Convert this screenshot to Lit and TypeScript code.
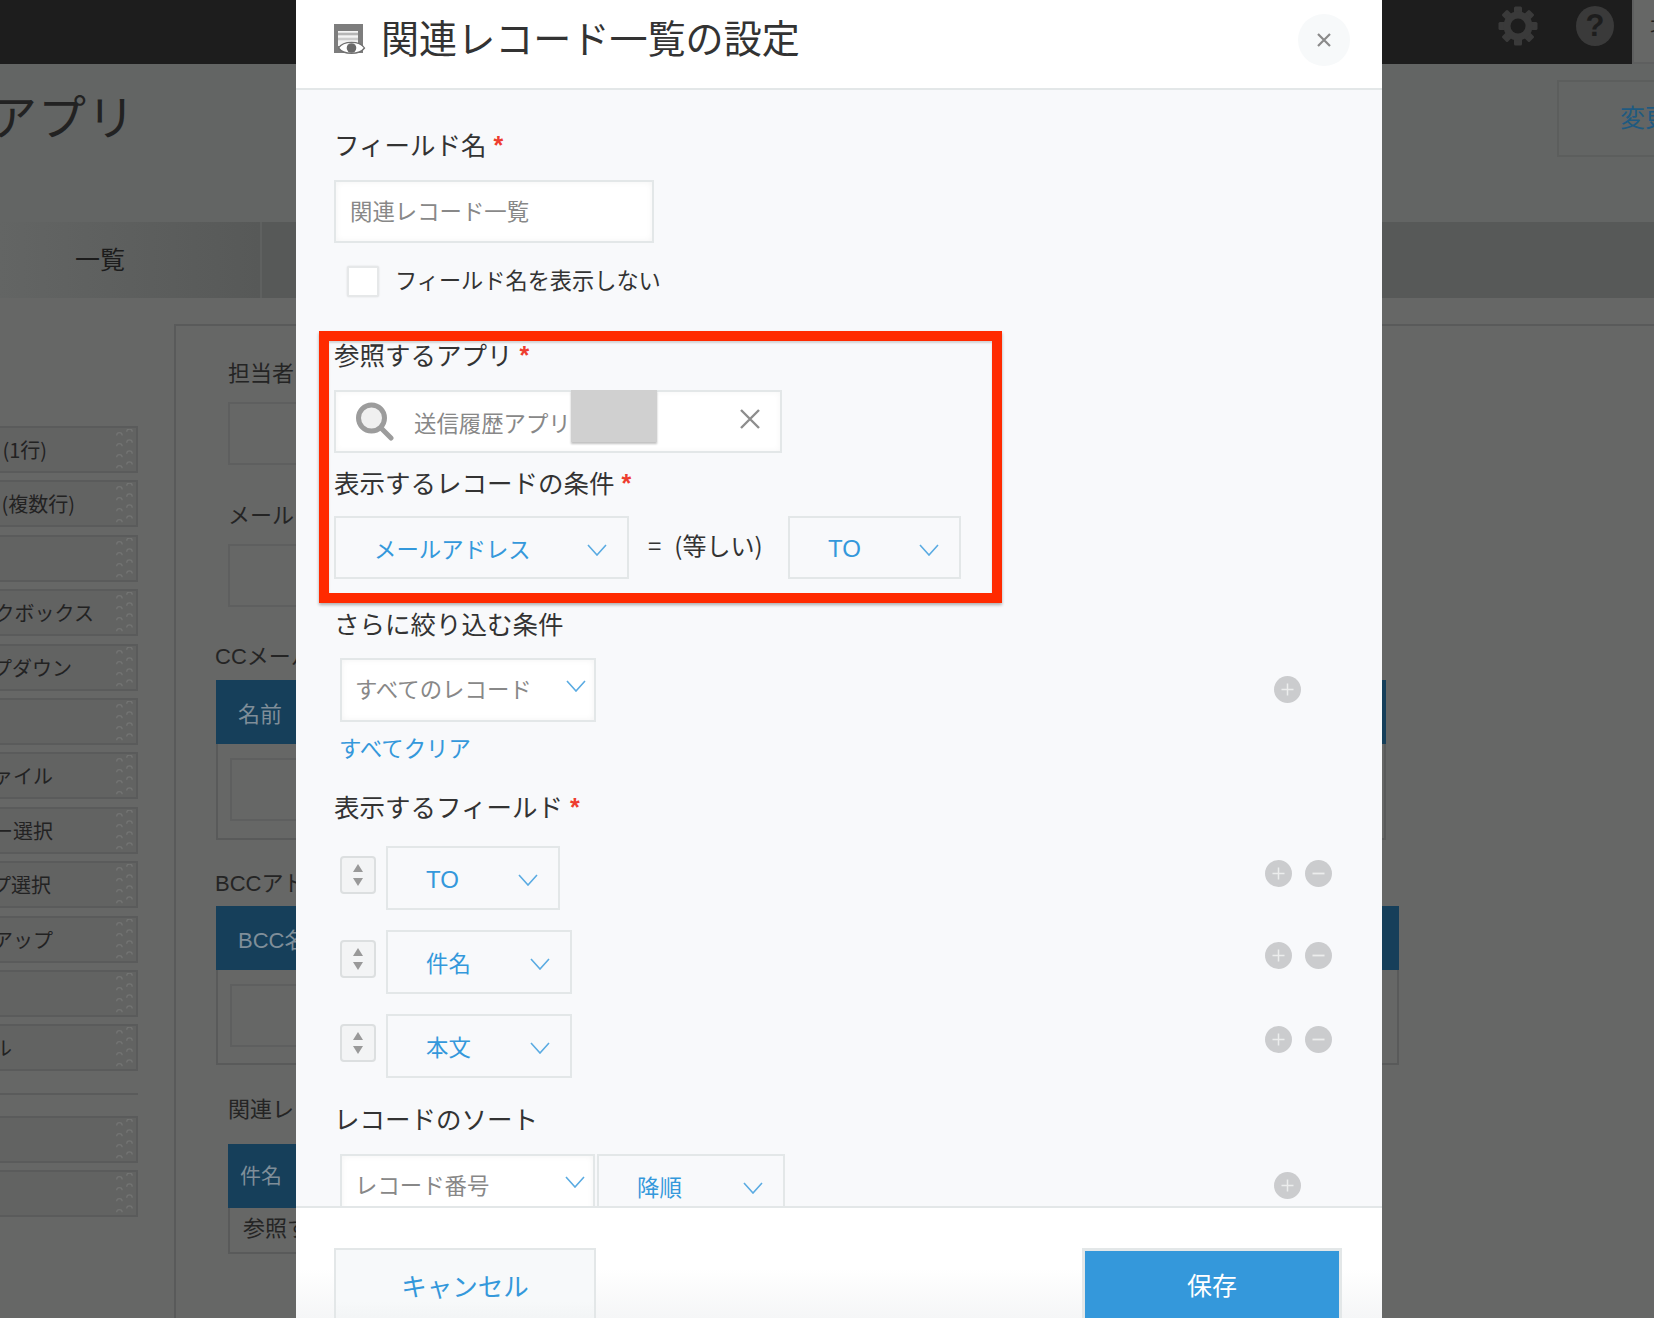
import { LitElement, html, css, svg } from "lit";
import { customElement } from "lit/decorators.js";

const chevron = html`<svg class="chev" viewBox="0 0 20 12"><path d="M1 1L10 11L19 1" fill="none" stroke="#5aabe2" stroke-width="1.6"/></svg>`;
const grip = html`<svg class="grip" viewBox="0 0 18 46">${[0, 1, 2, 3].flatMap((r) =>
  [0, 1].map((c) => svg`<path d="M${c * 11 + 1} ${r * 12 + (c ? 3 : 7)}a3 3 0 0 1 6 0" fill="none" stroke="#737473" stroke-width="1.4"/>`)
)}</svg>`;
const star = html`<span class="star">*</span>`;
const plus = html`<svg class="round" viewBox="0 0 27 27"><circle cx="13.5" cy="13.5" r="13.5" fill="#cbccce"/><path d="M13.5 7.5v12M7.5 13.5h12" stroke="#eceded" stroke-width="1.5"/></svg>`;
const minus = html`<svg class="round" viewBox="0 0 27 27"><circle cx="13.5" cy="13.5" r="13.5" fill="#cbccce"/><path d="M7.5 13.5h12" stroke="#eceded" stroke-width="1.8"/></svg>`;

const palette: [string, number][] = [
  ["(1行)", 47], ["(複数行)", 75], ["", 0], ["チェックボックス", 94], ["ドロップダウン", 72], ["", 0],
  ["添付ファイル", 53], ["ユーザー選択", 53], ["グループ選択", 51], ["ルックアップ", 53], ["", 0], ["ラベル", 12],
];

@customElement("app-root")
export class AppRoot extends LitElement {
  static styles = css`
    :host { display: block; width: 1654px; height: 1318px; position: relative; overflow: hidden; background: #666766;
      font-family: "Liberation Sans", "Noto Sans CJK JP", sans-serif; color: #222; }
    .topbar { height: 64px; background: #1d1d1d; display: flex; align-items: center; justify-content: flex-end; padding-bottom: 12px; box-sizing: border-box; }
    .gear { width: 40px; height: 40px; margin-right: 38px; }
    .help { width: 38px; height: 40px; border-radius: 50%; background: #3a3a3a; color: #1d1d1d; font: bold 31px/40px "Liberation Sans", sans-serif; text-align: center; margin-right: 18px; }
    .userblk { width: 22px; height: 64px; margin-top: 12px; background: #666766; border-left: 2px solid #5e5f5f; box-sizing: border-box; border-bottom: 2px solid #5e5f5f; overflow: hidden; color: #222; font-size: 20px; line-height: 54px; padding-left: 16px; white-space: nowrap; flex-shrink: 0; }
    .head { height: 158px; background: #636564; display: flex; justify-content: space-between; overflow: hidden; }
    .apptitle { width: 136px; display: flex; justify-content: flex-end; font-size: 48px; line-height: 100px; white-space: nowrap; letter-spacing: 1px; color: #222; font-family: "Noto Sans CJK JP", sans-serif; }
    .change { width: 240px; height: 77px; margin: 16px -143px 0 0; box-sizing: border-box; border: 2px solid #5c5e5d; color: #1f5a80; font-size: 25px; line-height: 68px; padding-left: 61px; flex-shrink: 0; font-family: "Noto Sans CJK JP", sans-serif; }
    .tabs { height: 76px; background: #575958; display: flex; }
    .tab { width: 262px; background: linear-gradient(90deg, #636564, #575958); border-right: 2px solid #5f6160; display: flex; align-items: center; font-size: 25px; padding: 0 0 4px 75px; box-sizing: border-box; color: #1c1c1c; font-family: "Noto Sans CJK JP", sans-serif; }
    .main { display: flex; padding-top: 26px; height: 1020px; box-sizing: border-box; }
    .sidebar { width: 138px; margin: 102px 36px 0 0; display: flex; flex-direction: column; gap: 7.4px; flex-shrink: 0; }
    .pal { height: 47px; flex-shrink: 0; background: #626362; border: solid #5a5b5b; border-width: 2px 2px 2px 0; box-sizing: border-box; display: flex; align-items: center; position: relative; overflow: hidden; font-size: 20px; color: #222; font-family: "Noto Sans CJK JP", sans-serif; }
    .pal-text { display: flex; justify-content: flex-end; white-space: nowrap; }
    .grip { position: absolute; left: 115px; top: 1px; width: 18px; height: 42px; }
    .sep { height: 2px; flex-shrink: 0; background: #5a5b5b; margin: 14px 0; }
    .canvas { flex: 1; border: solid #595a5a; border-width: 2px 0 0 2px; padding-left: 39px; overflow: hidden; font-size: 22px; color: #242424; min-width: 0; }
    .blabel { height: 30px; line-height: 30px; white-space: nowrap; }
    .in { margin-left: 13px; }
    .m33 { margin-top: 33px; } .m36 { margin-top: 36px; } .m35 { margin-top: 35px; } .m29 { margin-top: 29px; } .m30 { margin-top: 30px; }
    .bbox { width: 300px; height: 63px; margin: 13px 0 0 13px; border: 2px solid #5e5f5f; box-sizing: border-box; }
    .tbl { margin: 8px 0 0 1px; border: solid #595a5a; border-width: 0 2px 2px 2px; box-sizing: border-box; }
    .tbl1 { width: 1170px; height: 160px; }
    .tbl2 { width: 1183px; height: 159px; margin-top: 7px; }
    .tbl3 { width: 300px; height: 110px; margin: 19px 0 0 13px; }
    .thead { height: 64px; margin: 0 -2px; background: #163f5a; color: #7f8e99; display: flex; align-items: center; padding-left: 22px; font-size: 22px; white-space: nowrap; }
    .tbl3 .thead { padding: 0 0 5px 12px; font-size: 21px; box-sizing: border-box; }
    .tbox { width: 300px; height: 63px; margin: 14px 0 0 12px; border: 2px solid #5e5f5f; box-sizing: border-box; }
    .tcell { padding-left: 13px; line-height: 42px; white-space: nowrap; }

    .modal { position: absolute; left: 296px; top: 0; width: 1086px; height: 1318px; background: #f8f9fb; display: flex; flex-direction: column; font-family: "Noto Sans CJK JP", sans-serif; color: #333; }
    .mhead { height: 90px; flex-shrink: 0; box-sizing: border-box; background: #fff; border-bottom: 2px solid #e3e7e8; display: flex; align-items: center; padding: 0 31px 10px 38px; }
    .ticon { width: 32px; height: 32px; margin: 2px 15px 0 0; flex-shrink: 0; }
    .ttext { font-size: 38.1px; line-height: 50px; color: #333; white-space: nowrap; padding-bottom: 4px; }
    .close { margin: 2px 1px 0 auto; width: 52px; height: 52px; border-radius: 50%; background: #f7f9fa; display: flex; align-items: center; justify-content: center; }
    .close svg { width: 16px; height: 16px; }
    .mbody { flex: 1; min-height: 0; overflow: hidden; padding: 39px 38px 0; box-sizing: border-box; }
    .label { height: 34px; box-sizing: border-box; padding-bottom: 5px; display: flex; align-items: center; font-size: 25.5px; white-space: nowrap; color: #333; }
    .star { color: #ee3d2f; font: bold 25px/26px "Liberation Sans", sans-serif; margin-left: 7px; height: 24px; }
    .input { width: 320px; height: 63px; box-sizing: border-box; border: 2px solid #e3e7e8; background: #fff; box-shadow: inset 0 0 6px rgba(0,0,0,.05); display: flex; align-items: center; padding: 0 0 4px 14px; font-size: 22.4px; color: #888; margin-top: 17px; white-space: nowrap; }
    .chk { display: flex; align-items: center; height: 31px; margin: 23px 0 0 13px; font-size: 22.2px; gap: 16px; color: #333; }
    .chk span { padding-bottom: 5px; }
    .box { width: 32px; height: 31px; box-sizing: border-box; background: #fff; border: 2px solid #e6e8e9; border-radius: 2px; box-shadow: 0 0 2px rgba(0,0,0,.12); }
    .search { width: 448px; height: 63px; margin-top: 17px; box-sizing: border-box; border: 2px solid #e3e7e8; background: #fff; box-shadow: inset 0 0 6px rgba(0,0,0,.04); display: flex; align-items: center; position: relative; font-size: 22.4px; color: #888; white-space: nowrap; }
    .sicon { width: 40px; height: 40px; margin: -2px 18px 0 20px; flex-shrink: 0; }
    .redact { position: absolute; left: 235px; top: -2px; width: 86px; height: 52px; background: #d0d0d0; box-shadow: 0 2px 2px rgba(0,0,0,.25); }
    .sclear { position: absolute; right: 20px; top: 17px; width: 20px; height: 20px; }
    .cond { display: flex; align-items: flex-start; margin-top: 15px; }
    .cond .sel { height: 63px; }
    .eq { width: 159px; box-sizing: border-box; flex-shrink: 0; display: flex; align-items: center; gap: 13px; font-size: 24px; line-height: 30px; padding: 14px 0 0 19px; white-space: nowrap; color: #333; }
    .sel { height: 64px; box-sizing: border-box; border: 2px solid #e3e7e8; display: flex; align-items: center; justify-content: space-between; color: #3498db; font-size: 22.4px; padding: 0 20px 0 38px; flex-shrink: 0; white-space: nowrap; }
    .latin { font-family: "Liberation Sans", sans-serif; font-size: 24px; padding-top: 3px; }
    .chev { width: 20px; height: 12px; margin-top: 4px; flex-shrink: 0; }
    .white { background: #fff; box-shadow: inset 0 0 6px rgba(0,0,0,.05); color: #888; padding: 0 8px 0 13px; }
    .white span { padding-bottom: 5px; }
    .white .chev { margin-top: -8px; }
    .w295 { width: 295px; } .w173 { width: 173px; } .w174 { width: 174px; } .w186 { width: 186px; } .w256 { width: 256px; } .w255 { width: 255px; } .w188 { width: 188px; }
    .rowc { display: flex; align-items: flex-start; margin-left: 6px; }
    .mt16 { margin-top: 16px; } .mt17 { margin-top: 17px; } .mt29 { margin-top: 29px; } .mt25 { margin-top: 25px; } .mt21 { margin-top: 21px; } .mt20 { margin-top: 20px; } .mt42 { margin-top: 42px; } .mt14 { margin-top: 14px; }
    .clear { color: #3498db; font-size: 22.4px; line-height: 30px; margin: 10px 0 2px 5px; }
    .spin { width: 36px; height: 38px; margin: 10px 10px 0 0; box-sizing: border-box; border: 2px solid #dcdfe0; border-radius: 4px; background: #f3f4f5; display: flex; align-items: center; justify-content: center; flex-shrink: 0; }
    .spin svg { width: 12px; height: 24px; }
    .acts { margin-left: auto; display: flex; gap: 13px; margin-right: 12px; margin-top: 12px; }
    .acts.first { margin-top: 14px; }
    .acts.one { margin-right: 43px; margin-top: 18px; }
    .round { width: 27px; height: 27px; display: block; }
    .gap2 { margin-left: 2px; }
    .mfoot { height: 112px; flex-shrink: 0; box-sizing: border-box; border-top: 2px solid #e3e7e8; background: linear-gradient(#fff 55%, #f5f6f7); padding: 40px 40px 0 38px; display: flex; justify-content: space-between; overflow: hidden; }
    .cancel { width: 262px; height: 90px; box-sizing: border-box; border: 2px solid #e3e7e8; background: linear-gradient(#f7f9fa 60%, #eef0f1); color: #3498db; font-size: 25.5px; display: flex; justify-content: center; padding-top: 17px; line-height: 36px; }
    .save { width: 260px; height: 90px; box-sizing: border-box; border: 3px solid #e3e7e8; background: #3498db; color: #fff; font-size: 25px; display: flex; justify-content: center; padding-top: 15px; line-height: 36px; }
    .mark { position: absolute; left: 319px; top: 331px; width: 683px; height: 272px; box-sizing: border-box; border: 10px solid #ff2a00; box-shadow: 0 2px 3px rgba(0,0,0,.3), inset 0 2px 2px rgba(0,0,0,.15); pointer-events: none; }
  `;

  private sel(text: string, cls: string, latin = false) {
    return html`<div class="sel ${cls}"><span class=${latin ? "latin" : ""}>${text}</span>${chevron}</div>`;
  }

  private spin() {
    return html`<div class="spin"><svg viewBox="0 0 12 24"><path d="M6 1L11 9H1ZM6 23L1 15H11Z" fill="#999"/></svg></div>`;
  }

  private page() {
    return html`
      <div class="topbar">
        <svg class="gear" viewBox="-20 -20 40 40"><g fill="#3a3a3a">${[0, 45, 90, 135, 180, 225, 270, 315].map(
          (a) => svg`<rect x="-4" y="-19.5" width="8" height="10" rx="1.5" transform="rotate(${a})"/>`
        )}<circle r="14.5"/></g><circle r="7.5" fill="#1d1d1d"/></svg>
        <div class="help">?</div>
        <div class="userblk">才</div>
      </div>
      <div class="head">
        <div class="apptitle"><span>アプリ</span></div>
        <div class="change">変更</div>
      </div>
      <div class="tabs"><div class="tab">一覧</div></div>
      <div class="main">
        <div class="sidebar">
          ${palette.map(([t, end]) => html`<div class="pal"><div class="pal-text" style="width:${end}px"><span>${t}</span></div>${grip}</div>`)}
          <div class="sep"></div>
          <div class="pal">${grip}</div>
          <div class="pal">${grip}</div>
        </div>
        <div class="canvas">
          <div class="blabel in m33">担当者</div>
          <div class="bbox"></div>
          <div class="blabel in m36">メールアドレス</div>
          <div class="bbox"></div>
          <div class="blabel m35">CCメールアドレス</div>
          <div class="tbl tbl1"><div class="thead">名前</div><div class="tbox"></div></div>
          <div class="blabel m29">BCCアドレス</div>
          <div class="tbl tbl2"><div class="thead">BCC名</div><div class="tbox"></div></div>
          <div class="blabel in m30">関連レコード一覧</div>
          <div class="tbl tbl3"><div class="thead">件名</div><div class="tcell">参照するアプリ</div></div>
        </div>
      </div>`;
  }

  render() {
    return html`
      ${this.page()}
      <div class="modal">
        <div class="mhead">
          <svg class="ticon" viewBox="0 0 32 32">
            <rect x="0" y="0" width="29" height="29" fill="#7d7d7d"/>
            <rect x="4" y="7" width="20" height="15" fill="#f4f4f4"/>
            <path d="M4 10h20" stroke="#b5b5b5" stroke-width="2.6"/>
            <path d="M4 15h20" stroke="#cccccc" stroke-width="2.6"/>
            <path d="M4.5 24C9.500 16.500 25.500 16.500 30.500 24C25.500 31 9.500 31 4.500 24Z" fill="#fff" stroke="#707070" stroke-width="1.3"/>
            <circle cx="17.500" cy="24" r="4.800" fill="#6a6a6a"/>
          </svg>
          <div class="ttext">関連レコード一覧の設定</div>
          <div class="close"><svg viewBox="0 0 16 16"><path d="M2 2L14 14M14 2L2 14" stroke="#8a8a8a" stroke-width="2.2"/></svg></div>
        </div>
        <div class="mbody">
          <div class="label">フィールド名${star}</div>
          <div class="input">関連レコード一覧</div>
          <div class="chk"><div class="box"></div><span>フィールド名を表示しない</span></div>

          <div class="label mt42">参照するアプリ${star}</div>
          <div class="search">
            <svg class="sicon" viewBox="0 0 40 40"><circle cx="15.500" cy="17" r="13" fill="#f0f0f0" stroke="#9c9c9c" stroke-width="5"/><path d="M25 27L35 37" stroke="#9c9c9c" stroke-width="5" stroke-linecap="round"/></svg>
            <span>送信履歴アプリ</span>
            <div class="redact"></div>
            <svg class="sclear" viewBox="0 0 20 20"><path d="M1 1L19 19M19 1L1 19" stroke="#8d8d8d" stroke-width="2.4"/></svg>
          </div>
          <div class="label mt14">表示するレコードの条件${star}</div>
          <div class="cond">
            ${this.sel("メールアドレス", "w295")}
            <div class="eq"><span>=</span><span>(等しい)</span></div>
            ${this.sel("TO", "w173", true)}
          </div>

          <div class="label mt29">さらに絞り込む条件</div>
          <div class="rowc mt16">
            ${this.sel("すべてのレコード", "white w256")}
            <div class="acts one">${plus}</div>
          </div>
          <div class="clear">すべてクリア</div>

          <div class="label mt29">表示するフィールド${star}</div>
          <div class="rowc mt21">
            ${this.spin()}${this.sel("TO", "w174", true)}
            <div class="acts first">${plus}${minus}</div>
          </div>
          <div class="rowc mt20">
            ${this.spin()}${this.sel("件名", "w186")}
            <div class="acts">${plus}${minus}</div>
          </div>
          <div class="rowc mt20">
            ${this.spin()}${this.sel("本文", "w186")}
            <div class="acts">${plus}${minus}</div>
          </div>

          <div class="label mt25">レコードのソート</div>
          <div class="rowc mt17">
            ${this.sel("レコード番号", "white w255")}
            <div class="gap2">${this.sel("降順", "w188")}</div>
            <div class="acts one">${plus}</div>
          </div>
        </div>
        <div class="mfoot">
          <div class="cancel">キャンセル</div>
          <div class="save">保存</div>
        </div>
      </div>
      <div class="mark"></div>`;
  }
}
